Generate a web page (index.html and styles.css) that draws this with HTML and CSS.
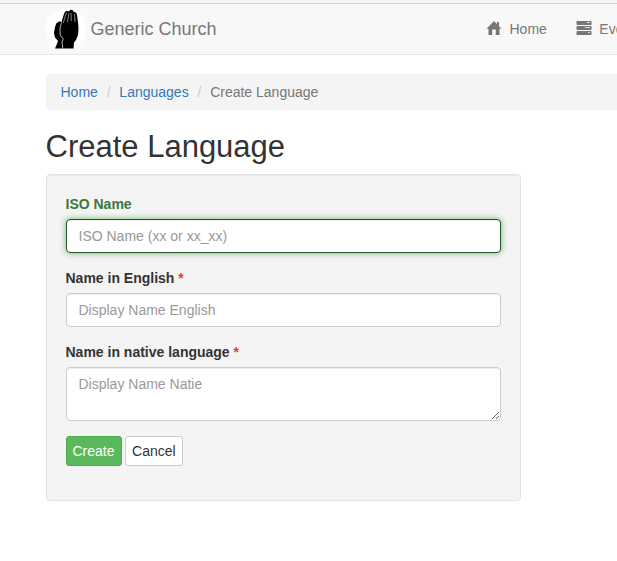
FILE: index.html
```html
<!DOCTYPE html>
<html lang="en">
<head>
<meta charset="utf-8">
<title>Create Language</title>
<link rel="stylesheet" href="styles.css">
</head>
<body>
<nav class="navbar">
  <a class="brand" href="#">
    <svg class="logo" viewBox="0 0 40 40" aria-hidden="true">
      <rect width="40" height="40" fill="#fafafa"/>
      <circle cx="20" cy="20" r="20" fill="#fff"/>
      <path d="M9 39.500L10.500 36 12 32 9 28.500 8 24 9 18 10.500 14 13.500 12.300 15.500 13 17 8 18.500 3.500 20.500 1.800 22.500 2.500 24.500.700 26.500 1 28 3 30 3.500 31 6 32 13 32.500 20 32 26 30 31 28 33.500 27.500 39.500Z" fill="#000"/>
      <path d="M15.500 13.500L14 19 14.200 26 17.200 30 16 33 16.800 39.500" fill="none" stroke="#ddd" stroke-width=".8"/>
      <path d="M17.300 14L20.500 3.500M21.500 13L23 4M25.300 12L25 4M29 13L28.500 5" fill="none" stroke="#bbb" stroke-width=".7"/>
    </svg>
    <span>Generic Church</span>
  </a>
  <a class="nav-link" href="#">
    <svg class="icon" viewBox="0 0 16 14" aria-hidden="true"><path d="M8 0L15.500 7.800H13.500V14H9.800V8.500H6.200V14H2.500V7.800H.5L8 0ZM11 1H13V5H11Z" fill="#777"/></svg>
    <span>Home</span>
  </a>
  <a class="nav-link" href="#">
    <svg class="icon" viewBox="0 0 16 14" aria-hidden="true"><g fill="#777"><rect x=".5" width="15" height="4" rx=".8"/><rect x=".5" y="5" width="15" height="4" rx=".8"/><rect x=".5" y="10" width="15" height="4" rx=".8"/></g><path d="M11 1.500H14M9 6.500H14M12 11.500H14" stroke="#ddd"/></svg>
    <span>Events</span>
  </a>
</nav>
<main class="content">
  <ol class="breadcrumb">
    <li><a href="#">Home</a></li>
    <li><a href="#">Languages</a></li>
    <li>Create Language</li>
  </ol>
  <h1>Create Language</h1>
  <form class="well">
    <div class="field success">
      <label for="iso">ISO Name</label>
      <input id="iso" type="text" placeholder="ISO Name (xx or xx_xx)">
    </div>
    <div class="field">
      <label for="english">Name in English <span class="required">*</span></label>
      <input id="english" type="text" placeholder="Display Name English">
    </div>
    <div class="field">
      <label for="native">Name in native language <span class="required">*</span></label>
      <textarea id="native" placeholder="Display Name Natie"></textarea>
    </div>
    <div class="actions">
      <button class="btn primary" type="button">Create</button>
      <button class="btn" type="button">Cancel</button>
    </div>
  </form>
</main>
</body>
</html>
```
FILE: styles.css
```css
* { box-sizing: border-box; }
html { overflow: hidden; }
body {
  margin: 0;
  border-top: 3px solid #f6f6f6;
  background: #fff;
  color: #333;
  font: 14px/20px "Liberation Sans", Arial, sans-serif;
  overflow: hidden;
}
a { color: #337ab7; text-decoration: none; }
.navbar {
  display: flex;
  align-items: center;
  height: 52px;
  padding-left: 45.5px;
  background: #f8f8f8;
  border-top: 1px solid #d0d1e5;
  border-bottom: 1px solid #e7e7e7;
  white-space: nowrap;
}
.navbar a { color: #777; flex: none; }
.brand {
  display: flex;
  align-items: center;
  gap: 5px;
  width: 440.5px;
  font-size: 18px;
}
.logo { width: 40px; height: 40px; }
.nav-link { display: flex; align-items: center; gap: 7.5px; margin-right: 29px; }
.icon { width: 16px; height: 14px; margin-bottom: 2px; }
.content { padding: 19px 0 0 45.5px; }
.breadcrumb {
  display: flex;
  height: 36px;
  margin: 0;
  padding: 8px 15px;
  list-style: none;
  background: #f4f4f4;
  border-radius: 4px 0 0 4px;
  color: #777;
}
.breadcrumb li + li::before { content: "/"; padding: 0 8.8px; color: #ccc; }
h1 { margin: 20px 0 10px; font-size: 31px; line-height: 34px; font-weight: 400; }
.well {
  width: 475px;
  height: 327px;
  padding: 19px;
  background: #f4f4f4;
  border: 1px solid #e3e3e3;
  border-radius: 4px;
  box-shadow: inset 0 1px 1px rgba(0, 0, 0, .05);
}
.field { margin-bottom: 15px; }
label { display: block; margin-bottom: 5px; font-weight: 700; }
.required { color: #e53935; }
input, textarea {
  display: block;
  width: 100%;
  height: 34px;
  padding: 6px 12px;
  border: 1px solid #ccc;
  border-radius: 4px;
  background: #fff;
  box-shadow: inset 0 1px 1px rgba(0, 0, 0, .075);
  font: inherit;
}
textarea { height: 54px; resize: vertical; }
::placeholder { color: #999; opacity: 1; }
.success label { color: #3c763d; }
.success input {
  border-color: #2b542c;
  box-shadow: inset 0 1px 1px rgba(0, 0, 0, .075), 0 0 6px #67b168;
}
.actions { display: flex; gap: 3.5px; }
.btn {
  height: 30px;
  padding: 4px 6px;
  border: 1px solid #ccc;
  border-radius: 3px;
  background: #fff;
  color: #333;
  font: inherit;
}
.primary { color: #fff; background: #5cb85c; border-color: #4cae4c; }
```
